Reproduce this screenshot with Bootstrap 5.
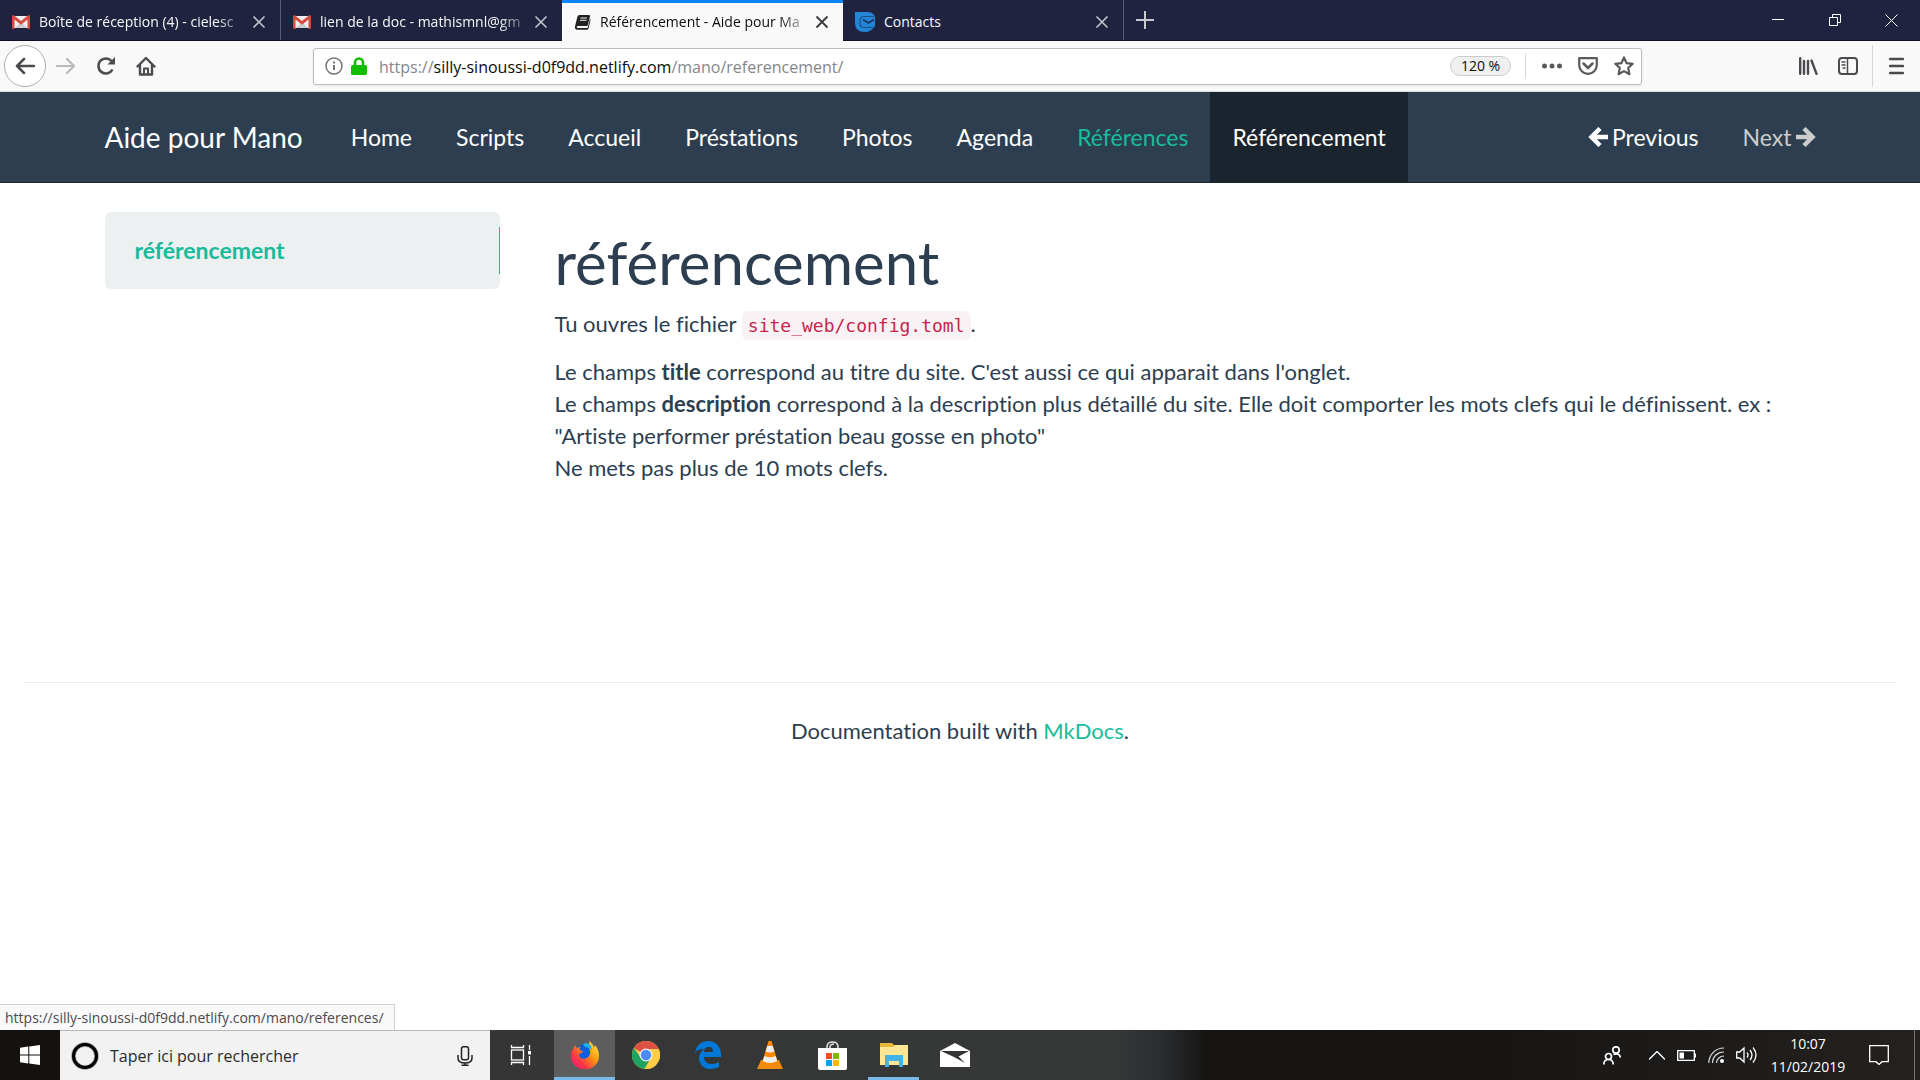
<!DOCTYPE html>
<html lang="fr">
<head>
<meta charset="utf-8">
<meta name="viewport" content="width=device-width, initial-scale=1">
<title>Référencement - Aide pour Mano</title>
<link href="https://cdn.jsdelivr.net/npm/bootstrap@5.3.0/dist/css/bootstrap.min.css" rel="stylesheet">
<style>
body{font-family:"Lato","Liberation Sans",sans-serif;color:#2c3e50;background:#fff;font-size:22px;line-height:32px;overflow:hidden;font-variant-ligatures:none}
svg{display:block;flex:none}
button{border:0;background:none;padding:0;color:inherit}
.ui{font-family:"Open Sans","Noto Sans",sans-serif}
/* tab strip */
.tabstrip{height:41px;background:#20233f;color:#f9f9fa;font-size:14px;line-height:20px;border-bottom:1px solid #0f1126}
.browser-tab{width:281px;padding:3px 14px 0 12px;height:40px;border-right:1px solid #5b5d73}
.browser-tab.on{background:#f9f9fa;color:#0c0c0d;height:41px;border-top:3px solid #0a84ff;border-right:0;padding-top:0}
.browser-tab.pre{border-right:0}
.tab-title{white-space:nowrap;flex:1 1 0;margin:0 5px 0 9px}
.tab-title.fade-end{-webkit-mask-image:linear-gradient(90deg,#000 85%,rgba(0,0,0,.1));mask-image:linear-gradient(90deg,#000 85%,rgba(0,0,0,.1))}
.win-btn{width:57px;height:40px}
/* toolbar */
.toolbar{height:51px;background:#f9f9fa;border-bottom:1px solid #dcdcdc;color:#4a4a4f;padding:0 0 0 4px}
.back-btn{width:42px;height:42px;border:1px solid #b1b1b3;border-radius:50%;background:#fff}
.tool-btn{width:40px;height:40px}
.urlbar{height:37px;border:1px solid #bcbcbc;border-radius:3px;background:#fff;box-shadow:0 1px 3px rgba(0,0,0,.08);margin:0 157px 0 147px;padding:0 7px 0 11px}
.url-text{font-size:16px;line-height:24px;color:#86868a;margin-left:12px;padding-top:2px;white-space:nowrap}
.url-text b{font-weight:400;color:#0c0c0d}
.zoom-pill{width:61px;height:20px;border:1px solid #ccc;border-radius:10px;background:#f0f0f1;font-size:14px;line-height:18px;color:#0c0c0d}
.tool-sep{width:1px;height:42px;background:#d7d7db}
.url-sep{width:1px;height:26px;background:#d7d7db;margin:0 16px 0 14px}
.sidebar-icon{margin:0 14px 0 20px}
/* site */
.site-nav{background:#2d3e50;border-bottom:1px solid #1b2732;height:91px;padding:0}
.page-box{width:100%;max-width:1755px;margin:0 auto;padding:0 22px}
.site-nav .navbar-brand{font-size:28px;line-height:40px;color:#fff;padding:0;margin:0 26px 0 0}
.site-nav .navbar-nav .nav-link{color:#fff;font-size:23px;line-height:32px;padding:29px 22px;height:90px}
.site-nav .navbar-nav .nav-link.hovered{color:#18bc9c}
.site-nav .navbar-nav .nav-link.active{background:#1a242f;color:#fff}
.site-nav .navbar-nav .nav-link.disabled{color:#ccc;padding-right:0}
.content-row{padding-top:29px}
.side-col{width:395px;flex:none}
.toc-panel{background:#ecf0f1;border-radius:6px;height:77px;padding:15px 0}
.toc-panel a{display:block;height:47px;line-height:47px;padding-left:30px;font-size:23px;font-weight:700;color:#18bc9c;text-decoration:none;border-right:1px solid #18bc9c}
.main-col{padding:0 0 0 55px;min-height:470px}
.main-col h1{font-size:60px;line-height:64px;font-weight:400;margin:18px 0 14px}
.main-col p{margin:0 0 14px}
.main-col code{font-family:"DejaVu Sans Mono","Liberation Mono",monospace;font-size:18px;color:#c7254e;background:#f9f2f4;border-radius:6px;padding:4px 6px}
.foot-rule{margin:0 23px 32px;border:0;border-top:1px solid #ecf0f1;opacity:1}
.foot-text a{color:#18bc9c;text-decoration:none}
.status-tip{position:absolute;left:0;bottom:100%;height:26px;width:395px;border:1px solid #d0d0d0;border-left:0;border-bottom:0;background:#f9f9fa;color:#4a4a4f;font-size:14px;line-height:26px;padding-left:5px;white-space:nowrap}
/* taskbar */
.taskbar{height:50px;color:#fff;background:linear-gradient(90deg,#14110f 0,#14110f 60px,#353535 490px,#363838 1110px,#292b2e 1165px,#161513 1205px,#171614 1500px,#24211f 100%)}
.start-btn{width:60px}
.search-box{width:430px;background:#f2f2f2;border-top:1px solid #b8b8b8;padding:0 17px 0 11px}
.search-box input{border:0;background:none;outline:0;font-size:16px;color:#2b2b2b;padding:0;margin-left:11px;min-width:0}
.search-box input::placeholder{color:#2b2b2b;opacity:1}
.app-btn{width:62px;height:50px}
.app-btn.running{width:61px;margin-left:2px;background:#5d5d5d;border-bottom:3px solid #76b9ed;padding-top:3px}
.app-btn.opened{width:51px;margin:0 5px;border-bottom:3px solid #76b9ed;padding-top:3px}
.tray{gap:12px}
.tray-people{margin-right:16px}
.clock{font-size:14px;line-height:23px;width:78px;text-align:center;margin-right:10px}
.tray-notes{margin-right:13px}
.desk-edge{width:6px;height:50px;border-left:1px solid #777}
</style>
</head>
<body class="vh-100 d-flex flex-column">
<header class="ui">
  <div class="tabstrip d-flex">
    <div class="browser-tab d-flex align-items-center">
      <svg width="18" height="14" viewBox="0 0 18 14"><path fill="#eee" d="M1 1h16v12H1z"/><path fill="#ccc" d="M3 13l6-6 6 6z"/><path fill="#d54b3d" d="M0 1.500Q0 0 1.500 0L9 6l7.500-6Q18 0 18 1.500V13q0 1-1 1h-1.500V4.500L9 9.800 2.500 4.500V14H1q-1 0-1-1z"/></svg>
      <span class="tab-title fade-end">Boîte de réception (4) - cielesc</span>
      <button aria-label="Fermer"><svg width="14" height="14" viewBox="0 0 14 14" stroke="#c3c3cc" stroke-width="1.600"><path d="M1.500 1.500l11 11m0-11l-11 11"/></svg></button>
    </div>
    <div class="browser-tab pre d-flex align-items-center">
      <svg width="18" height="14" viewBox="0 0 18 14"><path fill="#eee" d="M1 1h16v12H1z"/><path fill="#ccc" d="M3 13l6-6 6 6z"/><path fill="#d54b3d" d="M0 1.500Q0 0 1.500 0L9 6l7.500-6Q18 0 18 1.500V13q0 1-1 1h-1.500V4.500L9 9.800 2.500 4.500V14H1q-1 0-1-1z"/></svg>
      <span class="tab-title fade-end">lien de la doc - mathismnl@gm</span>
      <button aria-label="Fermer"><svg width="14" height="14" viewBox="0 0 14 14" stroke="#c3c3cc" stroke-width="1.600"><path d="M1.500 1.500l11 11m0-11l-11 11"/></svg></button>
    </div>
    <div class="browser-tab on d-flex align-items-center">
      <svg width="17" height="17" viewBox="0 0 17 17"><path d="M5.500 1h9.500q1.300 0 1 1.400L13.800 11q-.3 1-1.500 1H4q-1.200 0-1.200 1t1 1h9.700L16 5l.6.6-2.100 9q-.3 1.200-1.500 1.200H3q-2.500-.3-2-3.300L3.300 3Q3.800 1 5.500 1z" fill="#222"/><path d="M6.500 4h6.500M6 6.300h6.500" stroke="#eee"/></svg>
      <span class="tab-title fade-end">Référencement - Aide pour Ma</span>
      <button aria-label="Fermer"><svg width="14" height="14" viewBox="0 0 14 14" stroke="#38383d" stroke-width="1.800"><path d="M1.500 1.500l11 11m0-11l-11 11"/></svg></button>
    </div>
    <div class="browser-tab d-flex align-items-center">
      <svg width="20" height="20" viewBox="0 0 20 20"><path fill="#2385d6" d="M0 0h13q5 0 7 5v9q-4 6-10 6Q0 20 0 11z"/><path d="M19 4.500H9Q5 4.500 5 8.500v3q0 4 4 4h9" fill="none" stroke="#1b4f85" stroke-width="1.200"/><path d="M8 7.500l5.500 3.500L19 7.500" fill="none" stroke="#1b3560" stroke-width="1.600"/></svg>
      <span class="tab-title">Contacts</span>
      <button aria-label="Fermer"><svg width="14" height="14" viewBox="0 0 14 14" stroke="#c3c3cc" stroke-width="1.600"><path d="M1.500 1.500l11 11m0-11l-11 11"/></svg></button>
    </div>
    <button class="px-2 ms-1" aria-label="Nouvel onglet"><svg width="18" height="18" viewBox="0 0 18 18" stroke="#c8c8d0" stroke-width="2"><path d="M9 0v18M0 9h18"/></svg></button>
    <div class="d-flex ms-auto">
      <button class="win-btn d-flex align-items-center justify-content-center" aria-label="Réduire"><svg width="12" height="12" stroke="#fff"><path d="M0 5.500h12"/></svg></button>
      <button class="win-btn d-flex align-items-center justify-content-center" aria-label="Restaurer"><svg width="12" height="12" fill="none" stroke="#fff"><path d="M.5 3.500h8v8h-8zM3.500 3V.500h8v8H9"/></svg></button>
      <button class="win-btn d-flex align-items-center justify-content-center" aria-label="Quitter"><svg width="13" height="13" stroke="#fff"><path d="M.5.500l12 12m0-12l-12 12"/></svg></button>
    </div>
  </div>
  <div class="toolbar d-flex align-items-center">
    <button class="back-btn d-flex align-items-center justify-content-center" aria-label="Précédent"><svg width="20" height="18" viewBox="0 0 20 18" fill="none" stroke="#4a4a4f" stroke-width="2.500" stroke-linecap="round" stroke-linejoin="round"><path d="M19 9H2m7-7L2 9l7 7"/></svg></button>
    <button class="tool-btn d-flex align-items-center justify-content-center" aria-label="Suivant"><svg width="20" height="18" viewBox="0 0 20 18" fill="none" stroke="#b9b9bb" stroke-width="2.200" stroke-linecap="round" stroke-linejoin="round"><path d="M1 9h17m-7-7l7 7-7 7"/></svg></button>
    <button class="tool-btn d-flex align-items-center justify-content-center" aria-label="Actualiser"><svg width="20" height="20" viewBox="0 0 20 20" fill="none" stroke="#4a4a4f" stroke-width="2.600"><path d="M16.500 13.500A7.500 7.500 0 1 1 15.500 5"/><path d="M19 1v7.500h-7.500z" fill="#4a4a4f" stroke="none"/></svg></button>
    <button class="tool-btn d-flex align-items-center justify-content-center" aria-label="Accueil"><svg width="20" height="20" viewBox="0 0 20 20" fill="none" stroke="#4a4a4f" stroke-width="2.400" stroke-linejoin="round" stroke-linecap="round"><path d="M1.500 10.500L10 2l8.500 8.500M4 9.500V18.500h12V9.500"/><path d="M8 18v-5.500h4V18" stroke-width="2"/></svg></button>
    <div class="urlbar flex-grow-1 d-flex align-items-center">
      <svg width="18" height="18" viewBox="0 0 18 18" fill="none" stroke="#737377" stroke-width="1.500"><circle cx="9" cy="9" r="8"/><path d="M9 8v5M9 4.500v2" stroke-width="2"/></svg>
      <svg class="ms-2" width="16" height="18" viewBox="0 0 16 18"><path d="M4 9V5.500a4 4 0 0 1 8 0V9" fill="none" stroke="#12bc00" stroke-width="2.600"/><rect y="8" width="16" height="10" rx="1.500" fill="#12bc00"/></svg>
      <span class="url-text">https://<b>silly-sinoussi-d0f9dd.netlify.com</b>/mano/referencement/</span>
      <button class="zoom-pill ms-auto">120 %</button>
      <span class="url-sep"></span>
      <svg width="20" height="20" fill="#5a5a5e"><circle cx="2.500" cy="10" r="2.500"/><circle cx="10" cy="10" r="2.500"/><circle cx="17.500" cy="10" r="2.500"/></svg>
      <svg class="mx-3" width="20" height="18" viewBox="0 0 20 18" fill="none" stroke="#5a5a5e" stroke-width="2.200" stroke-linejoin="round"><path d="M1.200 1.200h17.600V8a8.800 8.800 0 0 1-17.600 0z"/><path d="M5.500 6.500L10 11l4.500-4.500" stroke-width="2.500" stroke-linecap="round"/></svg>
      <svg width="20" height="20" viewBox="0 0 20 20" fill="none" stroke="#5a5a5e" stroke-width="2.200" stroke-linejoin="round"><path d="M10 1.500l2.600 5.600 6.100.7-4.500 4.200 1.200 6.200L10 15.100l-5.400 3.100L5.800 12 1.300 7.800l6.100-.7z"/></svg>
    </div>
    <svg width="19" height="18" viewBox="0 0 19 18" stroke="#4a4a4f" stroke-width="2.400" stroke-linecap="round"><path d="M1.200 1.200v15.600M5 4v12.800M9 4v12.800M12.500 3.500l5 13.300"/></svg>
    <svg class="sidebar-icon" width="20" height="18" viewBox="0 0 20 18" fill="none" stroke="#4a4a4f" stroke-width="2"><rect x="1" y="1" width="18" height="16" rx="3"/><path d="M9.500 1v16M3.500 5h4M3.500 8h4M4.500 11h3" stroke-width="1.500"/></svg>
    <span class="tool-sep"></span>
    <button class="px-3" aria-label="Menu"><svg width="15" height="18" viewBox="0 0 15 18" stroke="#4a4a4f" stroke-width="2.400" stroke-linecap="round"><path d="M1 2h13M1 9h13M1 16h13"/></svg></button>
  </div>
</header>

<main class="flex-grow-1">
  <nav class="navbar navbar-expand site-nav">
    <div class="page-box d-flex align-items-center">
      <a class="navbar-brand" href="#">Aide pour Mano</a>
      <ul class="navbar-nav">
        <li class="nav-item"><a class="nav-link" href="#">Home</a></li>
        <li class="nav-item"><a class="nav-link" href="#">Scripts</a></li>
        <li class="nav-item"><a class="nav-link" href="#">Accueil</a></li>
        <li class="nav-item"><a class="nav-link" href="#">Préstations</a></li>
        <li class="nav-item"><a class="nav-link" href="#">Photos</a></li>
        <li class="nav-item"><a class="nav-link" href="#">Agenda</a></li>
        <li class="nav-item"><a class="nav-link hovered" href="#">Références</a></li>
        <li class="nav-item"><a class="nav-link active" href="#" aria-current="page">Référencement</a></li>
      </ul>
      <ul class="navbar-nav ms-auto">
        <li class="nav-item"><a class="nav-link d-flex align-items-center gap-1" href="#"><svg width="20" height="20" viewBox="0 0 20 20" fill="none" stroke="currentColor" stroke-width="4.500"><path d="M20 10H4M12 1.500L3.500 10l8.500 8.500"/></svg>Previous</a></li>
        <li class="nav-item"><a class="nav-link disabled d-flex align-items-center gap-1" href="#">Next<svg width="20" height="20" viewBox="0 0 20 20" fill="none" stroke="currentColor" stroke-width="4.500"><path d="M0 10h16M8 1.500l8.500 8.500L8 18.500"/></svg></a></li>
      </ul>
    </div>
  </nav>
  <div class="page-box content-row d-flex">
    <aside class="side-col"><div class="toc-panel"><a href="#top">référencement</a></div></aside>
    <article class="main-col flex-grow-1" id="top">
      <h1>référencement</h1>
      <p>Tu ouvres le fichier <code>site_web/config.toml</code>.</p>
      <p>Le champs <strong>title</strong> correspond au titre du site. C'est aussi ce qui apparait dans l'onglet.<br>
      Le champs <strong>description</strong> correspond à la description plus détaillé du site. Elle doit comporter les mots clefs qui le définissent. ex :<br>"Artiste performer préstation beau gosse en photo"<br>
      Ne mets pas plus de 10 mots clefs.</p>
    </article>
  </div>
  <hr class="foot-rule">
  <footer class="foot-text text-center">Documentation built with <a href="#">MkDocs</a>.</footer>
</main>

<div class="taskbar ui d-flex position-relative">
  <div class="status-tip">https://silly-sinoussi-d0f9dd.netlify.com/mano/references/</div>
  <button class="start-btn d-flex align-items-center justify-content-center" aria-label="Démarrer"><svg width="20" height="20" viewBox="0 0 20 20" fill="#fff"><path d="M0 2.800l8.300-1.200v7.900H0zM9.300 1.400L20 0v9.500H9.300zM0 10.500h8.300v7.900L0 17.200zM9.300 10.500H20V20L9.300 18.600z"/></svg></button>
  <div class="search-box d-flex align-items-center">
    <svg width="28" height="28" viewBox="0 0 28 28"><circle cx="14" cy="14" r="11.500" fill="none" stroke="#999" stroke-width="4.500"/><circle cx="14" cy="14" r="11.500" fill="none" stroke="#000" stroke-width="3"/></svg>
    <input class="flex-grow-1" type="text" placeholder="Taper ici pour rechercher" aria-label="Rechercher">
    <svg width="16" height="20" viewBox="0 0 16 20" fill="none" stroke="#222" stroke-width="1.500"><rect x="4.500" y=".8" width="7" height="13" rx="2"/><path d="M1 9v3q0 5 7 5t7-5V9M8 17v2M4.500 19.200h7"/></svg>
  </div>
  <button class="app-btn d-flex align-items-center justify-content-center" aria-label="Vue des tâches"><svg width="22" height="20" viewBox="0 0 22 20" fill="none" stroke="#fff" stroke-width="1.300"><rect x="1.500" y="5" width="12" height="10"/><path d="M1.500 0v2.500h12V0M1.500 20v-2.500h12V20M19.500 0v5M19.500 11v9"/><path d="M18 6h3v3.500h-3z" fill="#fff" stroke="none"/></svg></button>
  <button class="app-btn running d-flex align-items-center justify-content-center" aria-label="Firefox"><svg width="28" height="28" viewBox="0 0 28 28"><defs><linearGradient id="ff" x1="1" y1="0" x2="0" y2="1"><stop offset="0" stop-color="#fff44f"/><stop offset=".4" stop-color="#ff980e"/><stop offset=".7" stop-color="#ff3647"/><stop offset="1" stop-color="#e31587"/></linearGradient></defs><circle cx="14" cy="13" r="10" fill="#0a5fdb"/><path fill="url(#ff)" d="M18 0c4 3 5 5 5 7l1-3c3 4 4 7 4 11a14 13.500 0 0 1-28 0c0-4 1-6 3-8V4l3 3c2-1 3-1 4-1-3 2-1 4 2 4-1 3-4 2-4 4 0 4 6 5 9 2-1 1 1 0 2-3 1-5-2-7-3-8 2-1 3-3 2-5z"/><path d="M12 3c4-2 9 1 9 6-3-3-5-2-7-3z" fill="#19b5f0"/></svg></button>
  <button class="app-btn d-flex align-items-center justify-content-center" aria-label="Chrome"><svg width="28" height="28" viewBox="0 0 28 28"><circle cx="14" cy="14" r="14" fill="#ffcd46"/><path fill="#dd5144" d="M14 14L1.900 7A14 14 0 0 1 26.600 8H14z"/><path fill="#1da362" d="M1.900 7A14 14 0 0 0 12.500 28L19 17l-5-3-5 3z"/><path fill="#ffcd46" d="M26.600 8A14 14 0 0 1 12.500 28L19.200 17V8z"/><circle cx="14" cy="14" r="6.500" fill="#f1f1f1"/><circle cx="14" cy="14" r="5.200" fill="#4c8bf5"/></svg></button>
  <button class="app-btn d-flex align-items-center justify-content-center" aria-label="Edge"><svg width="26" height="28" viewBox="0 0 26 28"><path fill="#0078d7" d="M0 12C1 4 7 0 13 0c8 0 13 6 13 13v3H9c0 5 4 7 8 7 3 0 5-1 7-2v5c-3 1-5 2-9 2C8 28 4 23 4 17c0-4 2-7 5-9-5 0-8 2-9 4zm9-1h9c0-3-1-5-4-5S9 8 9 11z"/></svg></button>
  <button class="app-btn d-flex align-items-center justify-content-center" aria-label="VLC"><svg width="26" height="28" viewBox="0 0 26 28"><path fill="#f08a0c" d="M4 19h18l4 9H0z"/><path fill="#ff8800" d="M11.500 0h3L21 22q-8 5-16 0z"/><path fill="#eee" d="M10.300 5h5.400l1.700 5.500q-4.400 2-8.800 0zM7.300 15q5.700 2.500 11.400 0l1.500 5q-7 4-14.400 0z"/></svg></button>
  <button class="app-btn d-flex align-items-center justify-content-center" aria-label="Store"><svg width="29" height="29" viewBox="0 0 29 29"><path d="M9 8V6q0-5 5.500-5T20 6v2M12 8V6q0-3 4-3" fill="none" stroke="#ddd" stroke-width="1.600"/><path fill="#fff" d="M0 7h29v20q0 2-2 2H2q-2 0-2-2z"/><path fill="#f25022" d="M8 12h6v6H8z"/><path fill="#7fba00" d="M15 12h6v6h-6z"/><path fill="#00a4ef" d="M8 19h6v6H8z"/><path fill="#ffb900" d="M15 19h6v6h-6z"/></svg></button>
  <button class="app-btn opened d-flex align-items-center justify-content-center" aria-label="Explorateur"><svg width="28" height="24" viewBox="0 0 28 24"><path fill="#e8b83c" d="M0 0h12l2 2h13v8H0z"/><path fill="#ffe694" d="M0 4h13l2-2h13v20H0z"/><path fill="#3fb4e8" d="M5 24V12h18v12h-4v-6H9v6z"/></svg></button>
  <button class="app-btn d-flex align-items-center justify-content-center" aria-label="Courrier"><svg width="30" height="24" viewBox="0 0 30 24"><path fill="#fff" d="M0 8l15-8 15 8v16H0z"/><path fill="#333" d="M1 8h28l-10.500 5.500L25 20l-11-6z"/></svg></button>
  <div class="tray d-flex align-items-center ms-auto">
    <svg class="tray-people" width="18" height="19" viewBox="0 0 18 19" fill="none" stroke="#fff" stroke-width="1.700"><circle cx="13" cy="4" r="3.200"/><circle cx="5.500" cy="10.500" r="3"/><path d="M.8 18.500q0-5 4.700-5t4.700 5M10.500 8.500q6-2 7 3"/></svg>
    <svg width="16" height="9" fill="none" stroke="#fff" stroke-width="1.400"><path d="M0 8.500l8-8 8 8"/></svg>
    <svg width="19" height="11" viewBox="0 0 19 11"><path d="M.7.700h16.600v9.600H.7z" fill="none" stroke="#fff" stroke-width="1.300"/><path d="M2.500 2.500H7v6H2.500zM18 3.500h1v4h-1z" fill="#fff"/></svg>
    <svg width="16" height="16" viewBox="0 0 16 16" fill="none" stroke="#ddd" stroke-width="1.200"><path d="M.8 16A15 15 0 0 1 16 1M4.500 16A11 11 0 0 1 16 5M8.500 16A7.500 7.500 0 0 1 16 9"/><circle cx="14" cy="14" r="2" fill="#fff" stroke="none"/></svg>
    <svg width="21" height="18" viewBox="0 0 21 18" fill="none" stroke="#fff" stroke-width="1.300"><path d="M.7 6h3L8 2v14l-4.300-4h-3zM11 6.500q2 2.500 0 5M14 4q4 5 0 10M17 1.500q6 7.500 0 15"/></svg>
    <div class="clock">10:07<br>11/02/2019</div>
    <svg class="tray-notes" width="20" height="20" viewBox="0 0 20 20" fill="none" stroke="#fff" stroke-width="1.300"><path d="M.7.700h18.600v16H13l-3 2.800-3-2.800H.7z"/></svg>
    <span class="desk-edge"></span>
  </div>
</div>
<script src="https://cdn.jsdelivr.net/npm/bootstrap@5.3.0/dist/js/bootstrap.bundle.min.js"></script>
</body>
</html>
